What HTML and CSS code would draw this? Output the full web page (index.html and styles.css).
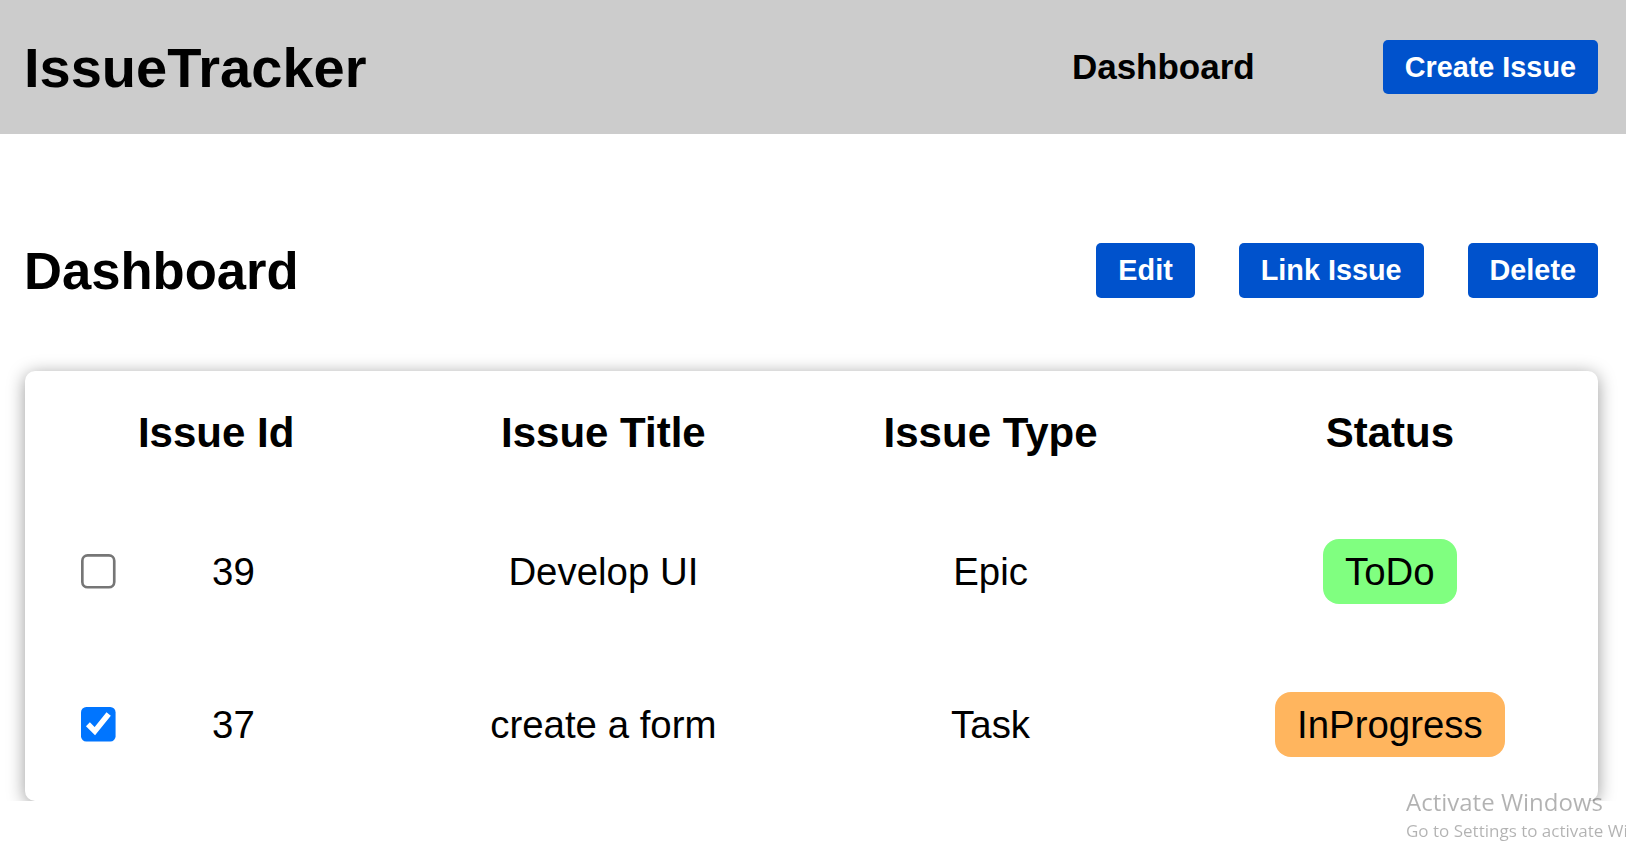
FILE: index.html
```html
<!DOCTYPE html>
<html lang="en">
<head>
<meta charset="utf-8">
<title>IssueTracker</title>
<link rel="stylesheet" href="styles.css">
</head>
<body>
<header class="topbar">
  <div class="logo">IssueTracker</div>
  <nav class="nav">
    <a class="nav-link" href="#">Dashboard</a>
    <button class="btn btn-create">Create Issue</button>
  </nav>
</header>
<main class="main">
  <div class="toolbar">
    <h1 class="page-title">Dashboard</h1>
    <div class="actions">
      <button class="btn">Edit</button>
      <button class="btn">Link Issue</button>
      <button class="btn">Delete</button>
    </div>
  </div>
  <div class="card">
    <table class="issues">
      <colgroup>
        <col class="c1"><col class="c2"><col class="c3"><col class="c4">
      </colgroup>
      <thead>
        <tr><th>Issue Id</th><th>Issue Title</th><th>Issue Type</th><th>Status</th></tr>
      </thead>
      <tbody>
        <tr>
          <td><div class="id-cell"><input type="checkbox" class="check"><span class="id">39</span></div></td>
          <td>Develop UI</td>
          <td>Epic</td>
          <td><span class="badge badge-todo">ToDo</span></td>
        </tr>
        <tr>
          <td><div class="id-cell"><input type="checkbox" class="check" checked><span class="id">37</span></div></td>
          <td>create a form</td>
          <td>Task</td>
          <td><span class="badge badge-progress">InProgress</span></td>
        </tr>
      </tbody>
    </table>
  </div>
</main>
<div class="watermark">
  <div class="wm-title">Activate Windows</div>
  <div class="wm-sub">Go to Settings to activate Windows.</div>
</div>
</body>
</html>
```
FILE: styles.css
```css
html, body {
  overflow: hidden;
}
body {
  margin: 0;
  font-family: "Liberation Sans", Arial, sans-serif;
  color: #000;
  background: #fff;
}
.topbar {
  height: 134px;
  background: #cccccc;
  display: flex;
  align-items: center;
  padding: 0 28px 0 24px;
  box-sizing: border-box;
}
.logo {
  font-size: 56px;
  font-weight: bold;
}
.nav {
  margin-left: auto;
  display: flex;
  align-items: center;
  gap: 128px;
}
.nav-link {
  font-size: 35px;
  font-weight: bold;
  color: #000;
  text-decoration: none;
}
.btn {
  font-family: "Liberation Sans", Arial, sans-serif;
  font-size: 28.8px;
  font-weight: bold;
  color: #fff;
  background: #0052cc;
  border: none;
  border-radius: 5px;
  padding: 11px 22px;
  line-height: normal;
  cursor: pointer;
}
.btn-create {
  padding: 10.5px 22px;
}
.main {
  padding: 106px 28px 0 24px;
}
.toolbar {
  display: flex;
  align-items: center;
  justify-content: space-between;
}
.page-title {
  margin: 0;
  font-size: 52.6px;
  font-weight: bold;
}
.actions {
  display: flex;
  gap: 44px;
}
.card {
  margin: 70px 0 0 1px;
  background: #fff;
  border-radius: 10px;
  box-shadow: 0 3px 18px rgba(0, 0, 0, 0.4);
}
.issues {
  width: 100%;
  table-layout: fixed;
  border-collapse: collapse;
}
.c1 { width: 382px; }
.c2 { width: 392px; }
.c3 { width: 382px; }
.c4 { width: 416px; }
.issues th {
  height: 124px;
  padding: 0;
  font-size: 42px;
  font-weight: bold;
  text-align: center;
  vertical-align: middle;
}
.issues td {
  height: 153px;
  padding: 0;
  font-size: 38.4px;
  text-align: center;
  vertical-align: middle;
}
.id-cell {
  display: flex;
  align-items: center;
  padding: 0 56px;
}
.check {
  zoom: 2.66;
  margin: 0;
}
.id {
  flex: 1;
  text-align: center;
}
.badge {
  display: inline-block;
  padding: 10.2px 22.4px;
  border-radius: 16px;
  line-height: normal;
}
.badge-todo {
  background: #80ff80;
}
.badge-progress {
  background: #ffb55e;
}
.watermark {
  position: fixed;
  left: 1406px;
  top: 786px;
  white-space: nowrap;
  font-family: "Open Sans", "Noto Sans", sans-serif;
  color: rgba(0, 0, 0, 0.3);
  pointer-events: none;
}
.wm-title {
  font-size: 24px;
  line-height: 32px;
}
.wm-sub {
  font-size: 17px;
  line-height: 26px;
}
```
